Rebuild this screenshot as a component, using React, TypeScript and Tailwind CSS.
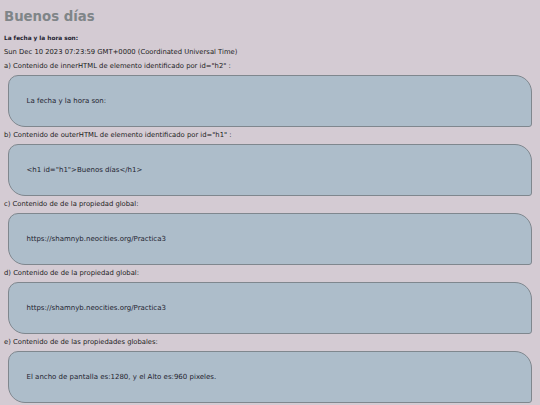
const sections = [
  {
    label: 'a) Contenido de innerHTML de elemento identificado por id="h2" :',
    body: "La fecha y la hora son:",
  },
  {
    label: 'b) Contenido de outerHTML de elemento identificado por id="h1" :',
    body: '<h1 id="h1">Buenos días</h1>',
  },
  {
    label: "c) Contenido de de la propiedad global:",
    body: "https://shamnyb.neocities.org/Practica3",
  },
  {
    label: "d) Contenido de de la propiedad global:",
    body: "https://shamnyb.neocities.org/Practica3",
  },
  {
    label: "e) Contenido de de las propiedades globales:",
    body: "El ancho de pantalla es:1280, y el Alto es:960 pixeles.",
  },
]

export default function App() {
  return (
    <div className="min-h-screen w-[540px] h-[405px] overflow-hidden bg-[#d4cbd3] px-[4px] pt-[9px] font-['DejaVu_Sans',Verdana,sans-serif] text-[#222]">
      <h1 className="text-[13.3px] font-bold leading-[16px] text-[#7f8588]">Buenos días</h1>
      <p className="mt-[9px] text-[5.8px] font-bold leading-[8px] text-[#1c1b2e]">La fecha y la hora son:</p>
      <p className="mt-[5px] text-[6.8px] leading-[10px]">
        Sun Dec 10 2023 07:23:59 GMT+0000 (Coordinated Universal Time)
      </p>
      {sections.map((s, i) => (
        <div key={i} className={i === 0 ? "mt-[5px]" : "mt-[4px]"}>
          <p className="text-[6.8px] leading-[9px]">{s.label}</p>
          <div className="ml-[4px] mr-[4px] mt-[4px] flex h-[52px] items-center rounded-tl-[10px] rounded-tr-[17px] rounded-br-[3px] rounded-bl-[17px] border border-[#7f878e] bg-[#adbdca] pl-[17.5px] text-[7px] text-[#1f2430]">
            {s.body}
          </div>
        </div>
      ))}
    </div>
  )
}
